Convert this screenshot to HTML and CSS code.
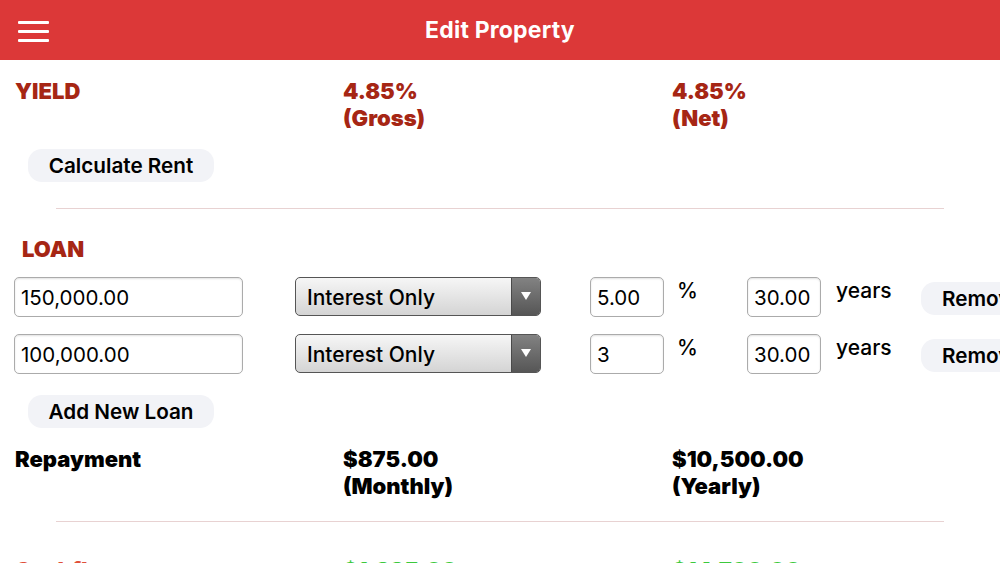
FILE: index.html
```html
<!DOCTYPE html>
<html>
<head>
<meta charset="utf-8">
<link rel="stylesheet" href="styles.css">
</head>
<body>
<header class="topbar">
  <div class="menu">
    <span></span><span></span><span></span>
  </div>
  <h1 class="title">Edit Property</h1>
</header>
<main class="content">
  <section class="stats stats-yield">
    <div class="label red">YIELD</div>
    <div class="value red">4.85%<br>(Gross)</div>
    <div class="value red">4.85%<br>(Net)</div>
  </section>
  <div class="btn-row first"><button class="pill">Calculate Rent</button></div>
  <hr class="divider divider-top">
  <h2 class="section red">LOAN</h2>
  <div class="loan">
    <input class="field amount" value="150,000.00">
    <div class="select"><span class="select-text">Interest Only</span><span class="select-arrow"></span></div>
    <input class="field small rate" value="5.00">
    <span class="unit pct">%</span>
    <input class="field small term" value="30.00">
    <span class="unit yrs">years</span>
    <button class="pill remove">Remove</button>
  </div>
  <div class="loan">
    <input class="field amount" value="100,000.00">
    <div class="select"><span class="select-text">Interest Only</span><span class="select-arrow"></span></div>
    <input class="field small rate" value="3">
    <span class="unit pct">%</span>
    <input class="field small term" value="30.00">
    <span class="unit yrs">years</span>
    <button class="pill remove">Remove</button>
  </div>
  <div class="btn-row second"><button class="pill">Add New Loan</button></div>
  <section class="stats stats-repay">
    <div class="label">Repayment</div>
    <div class="value">$875.00<br>(Monthly)</div>
    <div class="value">$10,500.00<br>(Yearly)</div>
  </section>
  <hr class="divider divider-bottom">
  <section class="stats stats-cash">
    <div class="label lightred">Cashflow</div>
    <div class="value green">$1,225.00<br>(Monthly)</div>
    <div class="value green">$14,700.00<br>(Yearly)</div>
  </section>
</main>
</body>
</html>
```
FILE: styles.css
```css
html, body {
  margin: 0;
  padding: 0;
  background: #ffffff;
  overflow: hidden;
  height: 563px;
}
body {
  font-family: Inter, "Liberation Sans", sans-serif;
  color: #000;
}
.topbar {
  height: 60px;
  background: #dc3838;
  display: flex;
  align-items: center;
  justify-content: center;
  position: relative;
}
.menu {
  position: absolute;
  left: 18px;
  top: 21px;
  width: 31px;
  display: flex;
  flex-direction: column;
  gap: 6px;
}
.menu span {
  display: block;
  height: 3px;
  background: #fff;
  border-radius: 1px;
}
.title {
  margin: 0;
  color: #fff;
  font-size: 23px;
  font-weight: 700;
  letter-spacing: 0.2px;
}
.stats {
  display: grid;
  grid-template-columns: 328px 329px 1fr;
  padding-left: 15px;
  font-weight: 900;
  font-size: 22px;
  line-height: 27px;
}
.stats-yield { padding-top: 18px; }
.stats-repay { padding-top: 18px; }
.stats-cash { padding-top: 35px; }
.red { color: #a62614; }
.lightred { color: #e0503a; }
.green { color: #3cc93c; }
.btn-row {
  display: flex;
  padding-left: 28px;
}
.btn-row.first { padding-top: 17px; }
.btn-row.second { padding-top: 21px; }
.pill {
  font-family: Inter, "Liberation Sans", sans-serif;
  background: #f2f3f7;
  border: none;
  border-radius: 14px;
  height: 33px;
  width: 186px;
  font-size: 20.7px;
  font-weight: 600;
  color: #000;
  padding: 0;
  flex-shrink: 0;
}
.divider {
  border: none;
  height: 1px;
  background: #e8d2d2;
  margin: 0 56px;
}
.divider-top { margin-top: 26px; }
.divider-bottom { margin-top: 21px; }
.section {
  margin: 28px 0 0 22px;
  font-size: 22px;
  font-weight: 900;
  line-height: 24px;
}
.loan {
  display: flex;
  align-items: flex-start;
  padding-left: 14px;
  height: 40px;
  margin-top: 16px;
  white-space: nowrap;
}
.loan + .loan { margin-top: 17px; }
.loan > * { flex-shrink: 0; }
.field {
  box-sizing: border-box;
  height: 40px;
  border: 1px solid #ababab;
  border-radius: 5px;
  font-family: Inter, "Liberation Sans", sans-serif;
  font-size: 20.5px;
  padding: 0 6px;
  color: #000;
  box-shadow: inset 0 1px 2px rgba(0,0,0,0.12);
  background: #fff;
}
.amount { width: 229px; }
.select {
  box-sizing: border-box;
  margin-left: 52px;
  width: 246px;
  height: 39px;
  border: 1px solid #555;
  border-radius: 5px;
  display: flex;
  overflow: hidden;
  background: linear-gradient(#f6f6f6, #d4d4d4);
}
.select-text {
  flex: 1;
  font-size: 21px;
  font-weight: 500;
  line-height: 39px;
  padding-left: 11px;
}
.select-arrow {
  width: 28px;
  flex: 0 0 28px;
  background: linear-gradient(#828282, #565656);
  border-left: 1px solid #4a4a4a;
  position: relative;
}
.select-arrow::after {
  content: "";
  position: absolute;
  left: 9px;
  top: 14px;
  border-left: 5px solid transparent;
  border-right: 5px solid transparent;
  border-top: 8px solid #fff;
}
.small { width: 74px; }
.rate { margin-left: 49px; }
.unit {
  font-size: 21px;
  font-weight: 500;
  line-height: 22px;
  padding-top: 3px;
  box-sizing: border-box;
}
.pct { width: 83px; padding-left: 13px; }
.yrs { width: 100px; padding-left: 15px; }
.remove {
  width: 110px;
  text-align: left;
  padding-left: 21px;
  margin-top: 5px;
}
```
